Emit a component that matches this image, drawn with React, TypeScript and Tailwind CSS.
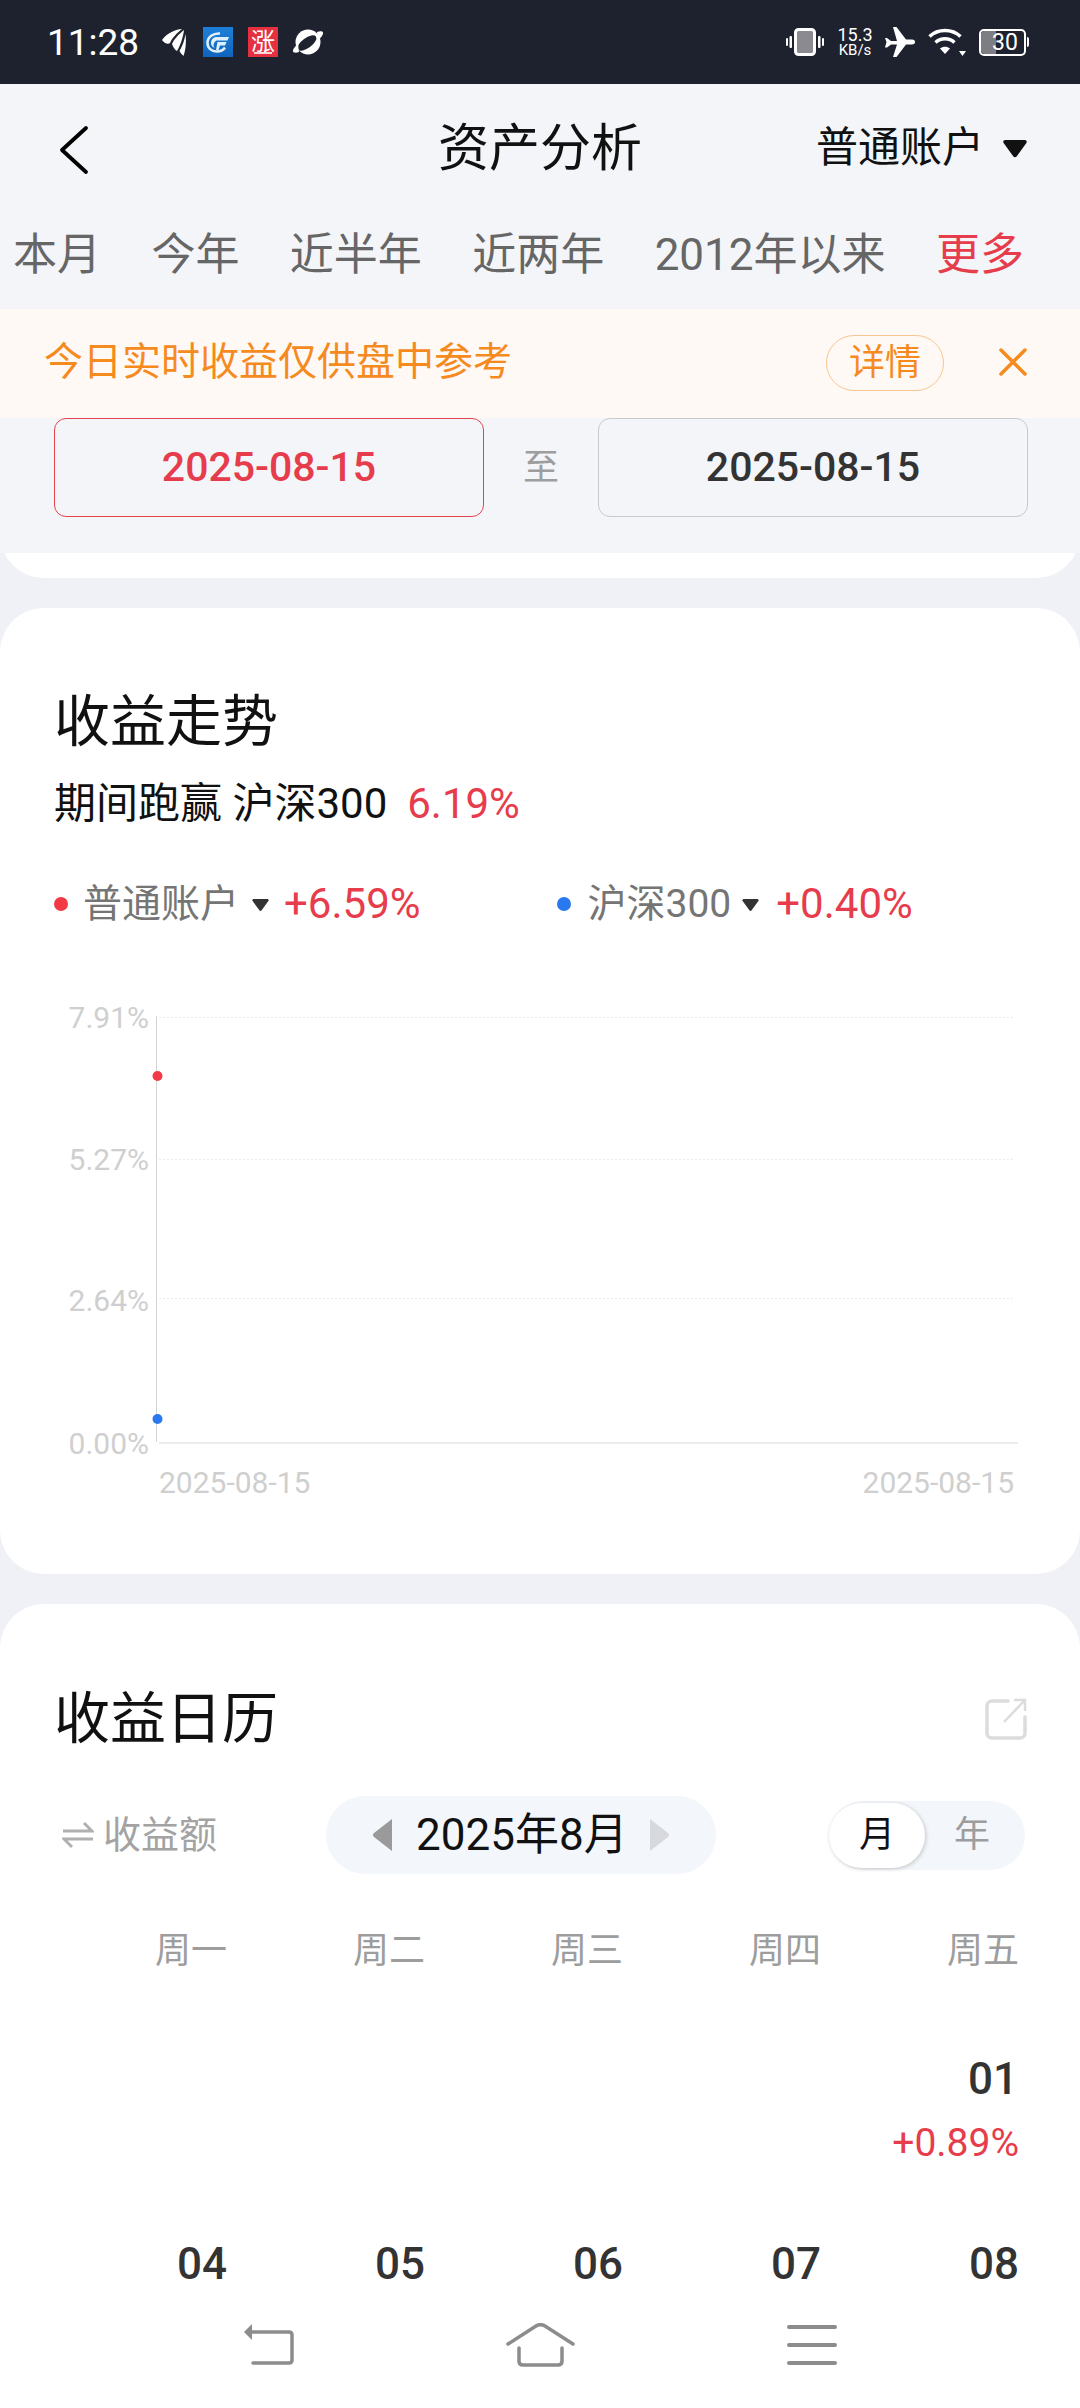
import React from "react";

function Tri({ className }: { className: string }) {
  return (
    <svg viewBox="0 0 24 20" className={className}>
      <path d="M3 2.5h18c1.6 0 2.4 1.6 1.5 2.8l-9 12.5c-.8 1-2.2 1-3 0L1.5 5.300C.6 4.100 1.400 2.500 3 2.500z" fill="currentColor" />
    </svg>
  );
}

function StatusBar() {
  return (
    <div className="h-[84px] shrink-0 bg-[#1e222e] flex items-center text-white pl-[47px] pr-[51px]">
      <span className="text-[37px] leading-none font-['Roboto',sans-serif] w-[115px]">11:28</span>
      <svg viewBox="0 0 24 28" className="w-[24px] h-[28px] mr-[17px]">
        <path d="M20 1C14 1 5 5 0 12c2 3 6 5 8 3C10 10 15 5 20 1z" fill="#fff" />
        <path d="M22 2C17 6 12 11 10 16c1 3 3 6 5 7 3-5 6-13 7-21z" fill="#fff" />
        <path d="M23.500 6c-1 6-3 12-6 17 1 2 3 4 4 5 2-5 3-14 2-22z" fill="#fff" />
      </svg>
      <div className="w-[30px] h-[30px] bg-gradient-to-b from-[#1d80d8] to-[#1263bc] flex items-center justify-center mr-[15px]">
        <svg viewBox="0 0 30 30" className="w-[30px] h-[30px]">
          <path d="M17 6.500C10 6 4.500 10 4.500 16c0 5 4 8.500 9 8.500 4 0 7-1.500 8.500-4" fill="none" stroke="#dff0fb" strokeWidth="2.500" />
          <path d="M12 10h14l-1.500 3.500H13.500c-2 1-3 3-3 5 .500 1 .500 2 1.500 2.500-2.500-.500-4-2.500-4-5 0-3 2-5.500 4.500-6z" fill="#dff0fb" />
          <path d="M14.500 15h9L22 18.500h-5L15.500 23H13z" fill="#dff0fb" />
        </svg>
      </div>
      <div className="w-[30px] h-[30px] bg-[#e5303f] flex flex-col items-center mr-[15px]">
        <span className="text-[24px] leading-[25px] font-['Noto_Sans_CJK_SC',sans-serif]">涨</span>
        <span className="w-[18px] h-[2px] bg-white/80" />
      </div>
      <svg viewBox="0 0 30 28" className="w-[30px] h-[28px]">
        <circle cx="15" cy="14" r="12.500" fill="#fff" />
        <ellipse cx="14" cy="15" rx="11" ry="5" transform="rotate(-36 14 15)" fill="#1e222e" />
        <path d="M24 4c3-1 5.500-1 6 .5.500 2-2 5-5 8zM6 24c-3 1-5.500 1-6-.5-.500-2 2-5 5-8z" fill="#fff" />
      </svg>
      <div className="flex-1" />
      <svg viewBox="0 0 38 28" className="w-[38px] h-[28px] mr-[13px]">
        <rect x="9.500" y="1.500" width="19" height="25" rx="3" fill="#8a8a90" stroke="#fff" strokeWidth="3" />
        <rect x="3.500" y="8" width="2.500" height="12" rx="1" fill="#fff" />
        <rect x="0" y="10" width="2" height="8" rx="1" fill="#fff" />
        <rect x="32" y="8" width="2.500" height="12" rx="1" fill="#fff" />
        <rect x="36" y="10" width="2" height="8" rx="1" fill="#fff" />
      </svg>
      <div className="flex flex-col items-center w-[36px] mr-[12px] font-['Roboto',sans-serif] leading-none">
        <span className="text-[18px] leading-[17px]">15.3</span>
        <span className="text-[15px] leading-[15px]">KB/s</span>
      </div>
      <svg viewBox="0 0 30 30" className="w-[30px] h-[30px] mr-[12px]">
        <path d="M0 11l2 0 4 3h6L8 0h3.500L21 12.500h6c2 0 3 1 3 2.500s-1 2.500-3 2.500h-6L11.500 30H8l4-12.500H6l-4 3H0l1.500-5.500z" fill="#fff" />
      </svg>
      <svg viewBox="0 0 39 30" className="w-[39px] h-[30px] mr-[13px]">
        <path d="M2.500 9.500C11 1.500 25 1.500 33.500 9.500" fill="none" stroke="#fff" strokeWidth="3.500" />
        <path d="M8.500 15.500C14 10.500 22 10.500 27.500 15.500" fill="none" stroke="#fff" strokeWidth="3.500" />
        <path d="M13 21.500c3-2.500 7-2.500 10 0L18 27z" fill="#fff" />
        <path d="M32 24h7l-3.500 5z" fill="#fff" />
      </svg>
      <div className="relative w-[50px] h-[27px] flex items-center">
        <div className="relative w-[47px] h-[27px] rounded-[5px] border-[2px] border-white overflow-hidden">
          <div className="h-full w-[15px] bg-[#7d7d84]" />
          <span className="absolute inset-0 pl-[11px] text-[23px] leading-[23px] font-['Roboto',sans-serif]">30</span>
        </div>
        <div className="w-[2px] h-[10px] ml-[1px] bg-white rounded-r" />
      </div>
    </div>
  );
}

function Header() {
  return (
    <div className="relative h-[128px] shrink-0 flex items-center justify-center">
      <svg viewBox="0 0 30 50" className="absolute left-[59px] top-[41px] w-[30px] h-[50px]">
        <path d="M27 3L3 25l24 22" fill="none" stroke="#000" strokeWidth="3.800" strokeLinecap="round" strokeLinejoin="round" />
      </svg>
      <span className="text-[51px] leading-none text-[#111]">资产分析</span>
      <div className="absolute right-[52px] top-[0px] h-full flex items-center text-[#111]">
        <span className="text-[42px] leading-none">普通账户</span>
        <Tri className="w-[26px] h-[22px] ml-[18px]" />
      </div>
    </div>
  );
}

function Tabs() {
  const tabs = ["本月", "今年", "近半年", "近两年", "2012年以来"];
  return (
    <div className="h-[82px] mb-[15px] pt-[4px] shrink-0 flex items-center justify-between pl-[13px] pr-[56px] text-[44px] leading-none text-[#666]">
      {tabs.map((t) => (
        <span key={t}>{t}</span>
      ))}
      <span className="text-[#e63c4b]">更多</span>
    </div>
  );
}

function Banner() {
  return (
    <div className="h-[109px] shrink-0 bg-[#fff9f5] flex items-center pl-[44px] text-[#f58a1f]">
      <span className="text-[39px] leading-none w-[782px] -mt-[2px]">今日实时收益仅供盘中参考</span>
      <span className="w-[118px] h-[56px] -mt-[2px] rounded-full border border-[#f7c58f] flex items-center justify-center text-[36px] leading-none">详情</span>
      <svg viewBox="0 0 28 28" className="w-[28px] h-[28px] ml-[55px] -mt-[3px]">
        <path d="M2 2l24 24M26 2L2 26" stroke="#f58a1f" strokeWidth="3.500" strokeLinecap="round" />
      </svg>
    </div>
  );
}

function DateRow() {
  return (
    <div className="bg-[#f3f5f9] pl-[54px] pr-[52px] pb-[36px] flex items-center justify-between">
      <div className="w-[430px] h-[99px] rounded-[12px] border border-[#e2444f] flex items-center justify-center text-[41px] leading-none font-medium text-[#e63c4b]">2025-08-15</div>
      <span className="text-[36px] leading-none text-[#9d9d9d]">至</span>
      <div className="w-[430px] h-[99px] rounded-[12px] border border-[#c9c9cc] flex items-center justify-center text-[41px] leading-none font-medium text-[#333]">2025-08-15</div>
    </div>
  );
}

function Chart() {
  const grid = [1016, 1158, 1297];
  const top = 990;
  const labels: [string, number][] = [["7.91%", 1027], ["5.27%", 1169], ["2.64%", 1310], ["0.00%", 1453]];
  return (
    <svg viewBox={`0 ${top} 1080 510`} className="block w-[1080px] h-[510px]">
      <line x1="156.500" x2="156.500" y1="1015" y2="1441" stroke="#d4d4d4" strokeWidth="1" />
      {grid.map((y) => (
        <line key={y} x1="159" x2="1013" y1={y + 0.5} y2={y + 0.5} stroke="#ececec" strokeWidth="1" strokeDasharray="2 2" />
      ))}
      <line x1="159" x2="1018" y1="1442" y2="1442" stroke="#ececec" strokeWidth="2" />
      {labels.map(([t, y]) => (
        <text key={t} x="149" y={y} textAnchor="end" fontSize="30" fill="#cfcfcf" fontFamily="Roboto, sans-serif">{t}</text>
      ))}
      <text x="159" y="1492" fontSize="30" fill="#cfcfcf" fontFamily="Roboto, sans-serif">2025-08-15</text>
      <text x="1014" y="1492" textAnchor="end" fontSize="30" fill="#cfcfcf" fontFamily="Roboto, sans-serif">2025-08-15</text>
      <circle cx="157.500" cy="1075" r="5" fill="#f23a47" />
      <circle cx="157.500" cy="1418" r="5" fill="#2a78f0" />
    </svg>
  );
}

function TrendCard() {
  return (
    <div className="bg-white rounded-[44px] mt-[30px] pb-[73px]">
      <div className="pl-[54px] pt-[78px]">
        <div className="text-[56px] leading-[72px] text-[#111]">收益走势</div>
        <div className="mt-[20px] h-[52px] flex items-center text-[42px] leading-none text-[#111] whitespace-nowrap">
          <span>期间跑赢 沪深300</span>
          <span className="ml-[20px] text-[#e63c4b]">6.19%</span>
        </div>
        <div className="mt-[48px] h-[52px] flex items-center text-[39px] leading-none">
          <span className="w-[14px] h-[14px] rounded-full bg-[#f23a47]" />
          <span className="ml-[15px] text-[#757575]">普通账户</span>
          <Tri className="w-[19px] h-[15px] ml-[12px] text-[#333]" />
          <span className="ml-[14px] text-[42px] text-[#e63c4b]">+6.59%</span>
          <span className="w-[14px] h-[14px] rounded-full bg-[#2a78f0] ml-[136px]" />
          <span className="ml-[17px] text-[#757575]">沪深300</span>
          <Tri className="w-[19px] h-[15px] ml-[10px] text-[#333]" />
          <span className="ml-[16px] text-[42px] text-[#e63c4b]">+0.40%</span>
        </div>
      </div>
      <div className="mt-[61px]">
        <Chart />
      </div>
    </div>
  );
}

function CalendarCard() {
  const weeks = ["周一", "周二", "周三", "周四", "周五"];
  const row2 = ["04", "05", "06", "07", "08"];
  return (
    <div className="bg-white rounded-t-[44px] mt-[30px] pt-[79px] pb-[200px]">
      <div className="pl-[54px] pr-[52px] flex items-center justify-between">
        <span className="text-[56px] leading-[72px] text-[#111]">收益日历</span>
        <svg viewBox="0 0 44 44" className="w-[44px] h-[44px]">
          <path d="M24 4H8a5 5 0 0 0-5 5v27a5 5 0 0 0 5 5h28a5 5 0 0 0 5-5V20" fill="none" stroke="#dcdcdc" strokeWidth="3.500" strokeLinecap="round" />
          <path d="M20 25L41 3M30 3h11v11" fill="none" stroke="#dcdcdc" strokeWidth="2.500" />
        </svg>
      </div>
      <div className="mt-[41px] flex items-center">
        <div className="w-[326px] pl-[62px] flex items-center text-[38px] leading-none text-[#a3a3a3]">
          <svg viewBox="0 0 32 30" className="w-[32px] h-[30px] mr-[9px]">
            <path d="M1 11h29l-8-8M31 19H2l8 8" fill="none" stroke="#b0b0b0" strokeWidth="3" />
          </svg>
          <span>收益额</span>
        </div>
        <div className="w-[390px] h-[78px] rounded-full bg-[#f3f6fa] flex items-center pl-[46px] text-[44px] leading-none text-[#111]">
          <svg viewBox="0 0 20 32" className="w-[20px] h-[32px]">
            <path d="M20 0v32L2 18c-1.500-1-1.500-3 0-4z" fill="#9a9a9a" />
          </svg>
          <span className="ml-[24px] w-[206px] whitespace-nowrap">2025年8月</span>
          <svg viewBox="0 0 20 32" className="w-[20px] h-[32px] ml-[28px]">
            <path d="M0 0v32l18-14c1.500-1 1.500-3 0-4z" fill="#d8d9de" />
          </svg>
        </div>
        <div className="ml-[113px] w-[196px] h-[69px] rounded-full bg-[#f3f6fa] flex items-center text-[36px] leading-none">
          <span className="w-[96px] h-[65px] rounded-full bg-white shadow-[1px_1px_4px_rgba(0,0,0,0.2)] flex items-center justify-center text-[#111]">月</span>
          <span className="w-[94px] flex justify-center text-[#9d9d9d]">年</span>
        </div>
      </div>
      <div className="grid grid-cols-5 pl-[29px] pr-[61px] text-right">
        {weeks.map((w) => (
          <div key={w} className="mt-[52px] text-[36px] leading-[50px] text-[#9d9d9d]">{w}</div>
        ))}
        <div className="col-start-5 mt-[78px] text-[44px] leading-[50px] font-medium text-[#333] pr-[1px]">01</div>
        <div className="col-start-5 mt-[17px] text-[39px] leading-[44px] text-[#e63c4b] whitespace-nowrap">+0.89%</div>
        {row2.map((d) => (
          <div key={d} className="mt-[74px] text-[44px] leading-[50px] font-medium text-[#333]">{d}</div>
        ))}
      </div>
    </div>
  );
}

function BottomNav() {
  return (
    <div className="h-[108px] shrink-0 bg-white flex justify-center items-start gap-[212px] pt-[23px]">
      <svg viewBox="0 0 51 42" className="w-[51px] h-[42px]">
        <path d="M1 9L9 1v16z" fill="#8c8c8c" />
        <path d="M6 9h40c2 0 3 1 3 3v25c0 2-1 3-3 3H10" fill="none" stroke="#8c8c8c" strokeWidth="3.500" strokeLinecap="round" />
      </svg>
      <svg viewBox="0 0 69 44" className="w-[69px] h-[44px]">
        <path d="M2 21L30 3c2.500-1.500 6.500-1.500 9 0l28 18" fill="none" stroke="#8c8c8c" strokeWidth="3.500" strokeLinecap="round" />
        <path d="M13 25v13c0 3 2 4 4 4h35c2 0 4-1 4-4V25" fill="none" stroke="#8c8c8c" strokeWidth="3.500" strokeLinecap="round" />
      </svg>
      <div className="w-[50px] h-[40px] mt-[2px] flex flex-col justify-between">
        <div className="h-[4px] rounded-full bg-[#8c8c8c]" />
        <div className="h-[4px] rounded-full bg-[#8c8c8c]" />
        <div className="h-[4px] rounded-full bg-[#8c8c8c]" />
      </div>
    </div>
  );
}

export default function App() {
  return (
    <div className="w-[1080px] h-[2408px] overflow-hidden bg-[#f3f5f9] flex flex-col font-['Roboto','Noto_Sans_CJK_SC',sans-serif]">
      <StatusBar />
      <Header />
      <Tabs />
      <Banner />
      <div className="flex-1 min-h-0 overflow-hidden bg-[#f0f1f6]">
        <DateRow />
        <div className="h-[25px] overflow-hidden">
          <div className="h-[100px] -mt-[75px] bg-white rounded-[44px]" />
        </div>
        <TrendCard />
        <CalendarCard />
      </div>
      <BottomNav />
    </div>
  );
}
